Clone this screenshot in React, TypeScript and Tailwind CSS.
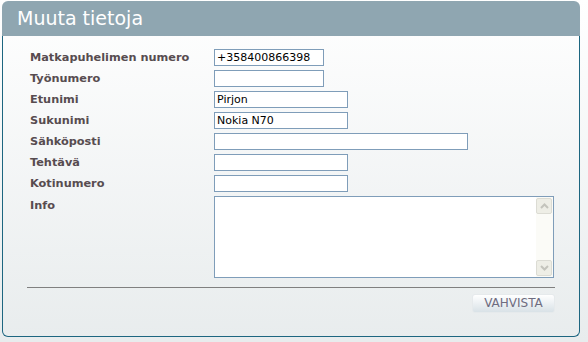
import React from 'react';

const fields = [
  { label: 'Matkapuhelimen numero', value: '+358400866398', width: 'w-[110px]' },
  { label: 'Työnumero', value: '', width: 'w-[110px]' },
  { label: 'Etunimi', value: 'Pirjon', width: 'w-[134px]' },
  { label: 'Sukunimi', value: 'Nokia N70', width: 'w-[134px]' },
  { label: 'Sähköposti', value: '', width: 'w-[254px]' },
  { label: 'Tehtävä', value: '', width: 'w-[134px]' },
  { label: 'Kotinumero', value: '', width: 'w-[134px]' },
];

const ScrollButton: React.FC<{ down?: boolean }> = ({ down }) => (
  <div className="h-[16px] w-[16px] rounded-[2px] border border-[#dcdcd4] bg-[#eeeee6] flex items-center justify-center">
    <svg width="9" height="6" viewBox="0 0 9 6">
      <path
        d={down ? 'M1 1 L4.5 4.5 L8 1' : 'M1 5 L4.5 1.5 L8 5'}
        fill="none"
        stroke="#c4c4bc"
        strokeWidth="2"
      />
    </svg>
  </div>
);

const App: React.FC = () => {
  return (
    <div
      className="w-[588px] h-[342px] bg-gradient-to-b from-[#ffffff] to-[#e8eced] pt-[1px] pl-[2px]"
      style={{ fontFamily: '"DejaVu Sans", Verdana, sans-serif' }}
    >
      <div className="w-[578px]">
        <div className="h-[35px] bg-[#8fa6b1] rounded-t-[6px] pl-[15px] pt-[5px]">
          <h1 className="text-[19px] leading-[24px] text-white">Muuta tietoja</h1>
        </div>
        <div className="h-[301px] border-x border-b border-[#1d6680] rounded-b-[6px] pt-[13px] pl-[27px] pr-[24px]">
          <div className="flex flex-col gap-[4px]">
            {fields.map((f) => (
              <div key={f.label} className="flex items-center h-[17px]">
                <div className="w-[184px] pt-[1px] text-[11.3px] font-bold text-[#574c50]">{f.label}</div>
                <input
                  readOnly
                  value={f.value}
                  className={`${f.width} h-[17px] border border-[#7f9db9] bg-white px-[2px] text-[11px] text-black outline-none`}
                />
              </div>
            ))}
            <div className="flex items-start">
              <div className="w-[184px] pt-[1px] text-[11.3px] font-bold text-[#574c50] leading-[17px]">Info</div>
              <div className="w-[340px] h-[82px] border border-[#7f9db9] bg-white flex justify-end">
                <div className="w-[17px] h-full bg-[#fbfbf7] flex flex-col justify-between py-[1px]">
                  <ScrollButton />
                  <ScrollButton down />
                </div>
              </div>
            </div>
          </div>
          <div className="mt-[9px] -ml-[3px] border-t border-[#808080]" />
          <div className="flex justify-end mt-[6px]">
            <button className="w-[83px] h-[19px] rounded-[3px] border border-[#e6eaec] bg-gradient-to-b from-[#ffffff] to-[#d9e2e7] text-[12px] leading-[17px] text-[#6e6c80]">
              VAHVISTA
            </button>
          </div>
        </div>
      </div>
    </div>
  );
};

export default App;
